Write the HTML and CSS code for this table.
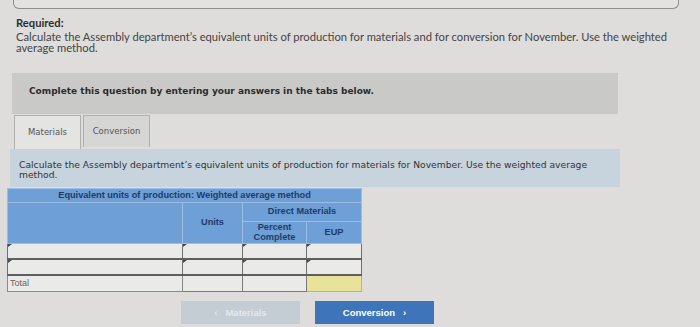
FILE: index.html
```html
<!DOCTYPE html>
<html lang="en">
<head>
<meta charset="utf-8">
<title>Required</title>
<link rel="stylesheet" href="styles.css">
</head>
<body>
<div class="topbox"></div>
<div class="required">
  <div class="req-title">Required:</div>
  <div class="req-text">Calculate the Assembly department’s equivalent units of production for materials and for conversion for November. Use the weighted average method.</div>
</div>
<div class="instruct">Complete this question by entering your answers in the tabs below.</div>
<div class="tabs">
  <div class="tab active">Materials</div>
  <div class="tab">Conversion</div>
</div>
<div class="panel">Calculate the Assembly department’s equivalent units of production for materials for November. Use the weighted average method.</div>
<table class="eup">
  <colgroup>
    <col class="c1"><col class="c2"><col class="c3"><col class="c4">
  </colgroup>
  <tr class="r-title"><th colspan="4">Equivalent units of production: Weighted average method</th></tr>
  <tr class="r-h1"><th rowspan="2"></th><th rowspan="2" class="units">Units</th><th colspan="2">Direct Materials</th></tr>
  <tr class="r-h2"><th>Percent<br>Complete</th><th>EUP</th></tr>
  <tr class="r-in"><td class="in"></td><td class="in"></td><td class="in"></td><td class="in"></td></tr>
  <tr class="r-in"><td class="in"></td><td class="in"></td><td class="in"></td><td class="in"></td></tr>
  <tr class="r-total"><td class="lbl">Total</td><td class="tot"></td><td class="tot"></td><td class="yellow"></td></tr>
</table>
<div class="nav">
  <div class="btn prev">&lsaquo;&nbsp;&nbsp;&nbsp;Materials</div>
  <div class="btn next">Conversion&nbsp;&nbsp;&nbsp;&rsaquo;</div>
</div>
</body>
</html>
```
FILE: styles.css
```css
* { box-sizing: border-box; }
html, body { margin: 0; padding: 0; }
body {
  background: #dedddb;
  width: 700px;
  height: 327px;
  overflow: hidden;
  font-family: Lato, "Liberation Sans", sans-serif;
  color: #3a3a3a;
}
.topbox {
  margin-left: 13px;
  width: 666px;
  height: 9px;
  border: 1px solid #8e8e8e;
  border-top: none;
  border-radius: 0 0 6px 6px;
  background: #e3e2e0;
}
.required {
  padding-left: 16px;
  margin-top: 8px;
  width: 690px;
  font-size: 11.2px;
  line-height: 12.5px;
}
.req-title { font-weight: bold; color: #2e2e2e; }
.req-text { color: #444; width: 670px; line-height: 11.5px; margin-top: 1px; }
.instruct {
  margin: 19px 0 0 12px;
  width: 606px;
  height: 41px;
  background: #c9cac8;
  padding: 13px 0 0 17px;
  font-family: "DejaVu Sans", Verdana, sans-serif;
  font-weight: bold;
  font-size: 9px;
  color: #2c2c2c;
}
.tabs {
  display: flex;
  gap: 2px;
  margin: 1px 0 0 14px;
  height: 34px;
}
.tab {
  width: 67px;
  height: 32px;
  border: 1px solid #b0b0ae;
  border-bottom: none;
  background: #d6d6d4;
  font-family: "DejaVu Sans", Verdana, sans-serif;
  font-size: 8.5px;
  color: #555;
  display: flex;
  align-items: center;
  justify-content: center;
}
.tab.active { background: #e4e4e2; height: 34px; }
.panel {
  margin-left: 10px;
  width: 610px;
  height: 38px;
  background: #c7d4dd;
  padding: 11px 0 0 9px;
  font-family: "DejaVu Sans", Verdana, sans-serif;
  font-size: 9.2px;
  line-height: 10px;
  color: #333;
}
.eup {
  margin: 1px 0 0 7px;
  border-collapse: collapse;
  table-layout: fixed;
  width: 354px;
  font-family: "Liberation Sans", Arial, sans-serif;
}
.c1 { width: 175px; }
.c2 { width: 60px; }
.c3 { width: 64px; }
.c4 { width: 55px; }
.eup th {
  background: #6e9fd6;
  color: #1e3d66;
  font-size: 9.2px;
  font-weight: bold;
  border: 1px solid #9dbde3;
  padding: 0;
  line-height: 10.5px;
  text-align: center;
}
.r-title th { height: 14px; }
.r-h1 th { height: 19px; }
.r-h1 th.units { vertical-align: middle; }
.r-h2 th { height: 21px; }
.eup td {
  padding: 0;
  height: 16px;
  border: 1px solid #6e6e6e;
  background: #eaeae8;
  position: relative;
}
.r-in td { border-bottom: 2px solid #5f5f5f; }
.in::before {
  content: "";
  position: absolute;
  left: 0;
  top: 0;
  border-top: 3px solid #3c4a5a;
  border-right: 4px solid transparent;
}
.eup td.lbl {
  font-size: 9px;
  color: #666;
  padding-left: 2px;
  border-color: #8a8a8a;
}
.eup td.tot { border-color: #7a7a7a; }
.eup td.yellow { background: #e7e39b; border-color: #b8b48a; }
.nav {
  display: flex;
  gap: 15px;
  margin: 9px 0 0 181px;
}
.btn {
  width: 119px;
  height: 23px;
  display: flex;
  align-items: center;
  justify-content: center;
  font-family: "Liberation Sans", Arial, sans-serif;
  font-weight: bold;
  font-size: 9.5px;
}
.prev { background: #c4cdd4; color: #e3e8ec; }
.next { background: #3e74b9; color: #ffffff; }
```
